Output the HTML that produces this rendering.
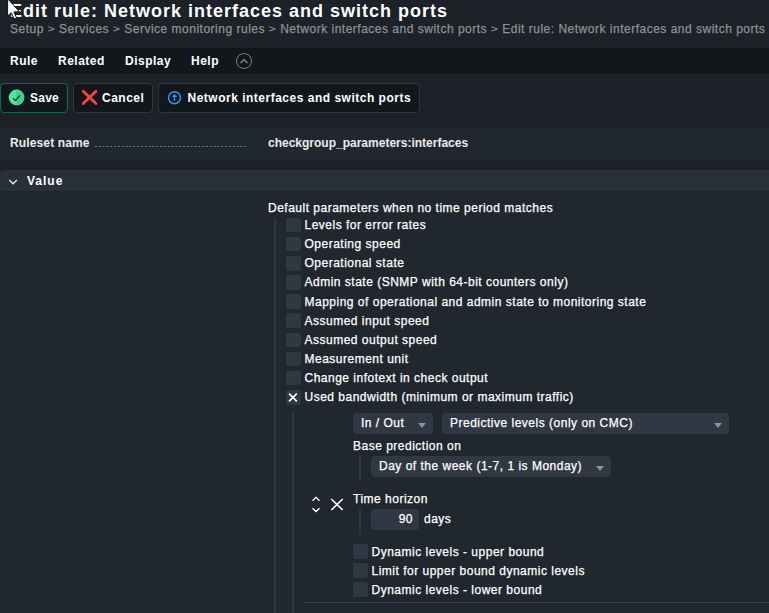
<!DOCTYPE html>
<html lang="en">
<head>
<meta charset="utf-8">
<title>Edit rule: Network interfaces and switch ports</title>
<style>
*{box-sizing:border-box;margin:0;padding:0}
html,body{width:769px;height:613px;overflow:hidden;background:#1c2228}
body{position:relative;font-family:"Liberation Sans",Arial,Helvetica,sans-serif;font-size:12px;color:#fff}
.abs{position:absolute;white-space:nowrap}
#title{left:10px;top:0;font-size:18px;font-weight:bold;line-height:22px;letter-spacing:1px;color:#fff}
#crumb{left:10px;top:22px;font-size:12px;line-height:15px;color:#8d9196;letter-spacing:.5px;-webkit-text-stroke:.25px currentColor}
#crumb span{display:inline-block;transform:scaleY(.72);transform-origin:50% 62%;position:relative;top:-1.300px}
#menubar{left:0;top:48px;width:769px;height:26px;background:#12171c;border-radius:3px 0 0 3px}
.mi{top:48px;height:26px;line-height:26px;font-weight:bold;font-size:12px;letter-spacing:.5px}
.btn{top:83px;height:30px;border:1px solid #2f3640;border-radius:4px;background:#12171c;font-weight:bold;line-height:28px;font-size:12px;letter-spacing:.5px}
#rowname{left:0;top:128px;width:769px;height:32px;background:#20272e;border-radius:4px 0 0 4px}
#valhead{left:0;top:170px;width:769px;height:21px;background:#283039;border-radius:4px 0 0 0}
.lbl{font-size:12px;line-height:15px;letter-spacing:.5px;-webkit-text-stroke:.25px currentColor}
.cb{width:15px;background:#2f3843;border-radius:2px}
.vline{width:2px;background:#2e3741}
.sel{height:21px;background:#2f3843;border-radius:4px;line-height:21px;padding-left:8px;font-size:12px;letter-spacing:.5px;-webkit-text-stroke:.25px currentColor}
.arr{width:0;height:0;border-left:4px solid transparent;border-right:4px solid transparent;border-top:5px solid #8d9299}
</style>
</head>
<body>
<div id="title" class="abs">Edit rule: Network interfaces and switch ports</div>
<div id="crumb" class="abs">Setup <span>&gt;</span> Services <span>&gt;</span> Service monitoring rules <span>&gt;</span> Network interfaces and switch ports <span>&gt;</span> Edit rule: Network interfaces and switch ports</div>

<div id="menubar" class="abs"></div>
<div class="abs mi" style="left:10px">Rule</div>
<div class="abs mi" style="left:58px">Related</div>
<div class="abs mi" style="left:125px">Display</div>
<div class="abs mi" style="left:191px">Help</div>
<svg class="abs" style="left:235px;top:52px" width="18" height="18" viewBox="0 0 18 18"><circle cx="9" cy="9" r="7.500" fill="none" stroke="#83878c" stroke-width=".900"/><path d="M5.600 11 L9 7.600 L12.400 11" fill="none" stroke="#8b9096" stroke-width="1.200"/></svg>

<div class="abs btn" style="left:0;width:68px;border-color:#17694a;padding-left:29px;letter-spacing:.25px">Save</div>
<svg class="abs" style="left:8px;top:89px" width="18" height="18" viewBox="8 89 18 18"><circle cx="16.500" cy="97.400" r="7.800" fill="#54e59d"/><path d="M16 89.620 A7.800 7.800 0 0 1 16 105.180 Z M16 89.600 H16.500 A7.800 7.800 0 0 1 16.500 105.200 H16 Z" fill="#43d08b"/><path d="M13.100 98.300 L15.400 100.600 L20.050 95.300" fill="none" stroke="#1b2a2b" stroke-width="1.200"/></svg>
<div class="abs btn" style="left:73px;width:80px;padding-left:28px">Cancel</div>
<svg class="abs" style="left:80px;top:88px" width="20" height="19" viewBox="80 88 20 19"><path d="M83.300 91.300 L95.900 103.500 M95.900 91.300 L83.300 103.500" stroke="#f4483a" stroke-width="2.800" stroke-linecap="round"/></svg>
<div class="abs btn" style="left:158px;width:262px;padding-left:28.500px">Network interfaces and switch ports</div>
<svg class="abs" style="left:166px;top:89px" width="18" height="18" viewBox="166 89 18 18"><circle cx="174.500" cy="97.650" r="6" fill="none" stroke="#2a97ee" stroke-width="1.500"/><path d="M174.500 93.800 L172.100 97.100 H173.850 V101.100 H175.150 V97.100 H176.900 Z" fill="#2a9df4"/></svg>

<div id="rowname" class="abs"></div>
<div class="abs lbl" style="left:10px;top:136px;font-weight:bold;letter-spacing:.13px;color:#ececec;-webkit-text-stroke:0">Ruleset name</div>
<div class="abs" style="left:95px;top:146px;width:153px;height:1px;background-image:linear-gradient(to right,#757b82 56%,transparent 56%);background-size:3.830px 1px"></div>
<div class="abs lbl" style="left:268px;top:136px;font-weight:bold;letter-spacing:0;color:#ececec;-webkit-text-stroke:0">checkgroup_parameters:interfaces</div>

<div class="abs" style="left:0;top:191px;width:769px;height:422px;background:#20272e"></div>
<div id="valhead" class="abs"></div>
<svg class="abs" style="left:8px;top:178px" width="10" height="8" viewBox="0 0 10 8"><path d="M1.300 2 L5.100 5.800 L8.900 2" fill="none" stroke="#e8e8e8" stroke-width="1.300"/></svg>
<div class="abs lbl" style="left:27px;top:174px;font-weight:bold;letter-spacing:1px;-webkit-text-stroke:0">Value</div>

<div class="abs lbl" style="left:268px;top:201px">Default parameters when no time period matches</div>
<div class="abs vline" style="left:274px;top:218px;height:395px"></div>

<div class="abs cb" style="left:286px;top:218px;height:14px"></div><div class="abs lbl" style="left:304.500px;top:218px">Levels for error rates</div>
<div class="abs cb" style="left:286px;top:237px;height:14px"></div><div class="abs lbl" style="left:304.500px;top:237px">Operating speed</div>
<div class="abs cb" style="left:286px;top:256px;height:15px"></div><div class="abs lbl" style="left:304.500px;top:256px">Operational state</div>
<div class="abs cb" style="left:286px;top:275px;height:15px"></div><div class="abs lbl" style="left:304.500px;top:275px">Admin state (SNMP with 64-bit counters only)</div>
<div class="abs cb" style="left:286px;top:294px;height:15px"></div><div class="abs lbl" style="left:304.500px;top:295px">Mapping of operational and admin state to monitoring state</div>
<div class="abs cb" style="left:286px;top:313px;height:15px"></div><div class="abs lbl" style="left:304.500px;top:314px">Assumed input speed</div>
<div class="abs cb" style="left:286px;top:333px;height:14px"></div><div class="abs lbl" style="left:304.500px;top:333px">Assumed output speed</div>
<div class="abs cb" style="left:286px;top:352px;height:14px"></div><div class="abs lbl" style="left:304.500px;top:352px">Measurement unit</div>
<div class="abs cb" style="left:286px;top:371px;height:14px"></div><div class="abs lbl" style="left:304.500px;top:371px">Change infotext in check output</div>
<div class="abs cb" style="left:286px;top:390px;height:15px"></div><div class="abs lbl" style="left:304.500px;top:390px">Used bandwidth (minimum or maximum traffic)</div>
<svg class="abs" style="left:287px;top:392px" width="12" height="12" viewBox="287 392 12 12"><path d="M289 393.600 L296.800 401.400 M296.800 393.600 L289 401.400" stroke="#fff" stroke-width="1.600"/></svg>

<div class="abs vline" style="left:292px;top:413px;height:200px"></div>
<div class="abs sel" style="left:353px;top:413px;width:80px">In / Out</div><div class="abs arr" style="left:418px;top:423px"></div>
<div class="abs sel" style="left:442px;top:413px;width:287px">Predictive levels (only on CMC)</div><div class="abs arr" style="left:714px;top:423px"></div>
<div class="abs lbl" style="left:353px;top:439px">Base prediction on</div>
<div class="abs vline" style="left:359px;top:456px;height:26px"></div>
<div class="abs sel" style="left:371px;top:456px;width:240px">Day of the week (1-7, 1 is Monday)</div><div class="abs arr" style="left:596px;top:466px"></div>

<svg class="abs" style="left:310px;top:495px" width="12" height="20" viewBox="310 495 12 20"><path d="M312.500 500.800 L316 497.400 L319.500 500.800 M312.500 508.200 L316 511.500 L319.500 508.200" fill="none" stroke="#fff" stroke-width="1.300"/></svg>
<svg class="abs" style="left:329px;top:497px" width="16" height="16" viewBox="329 497 16 16"><path d="M331.300 499 L342.700 510 M342.700 499 L331.300 510" stroke="#fff" stroke-width="1.600"/></svg>
<div class="abs lbl" style="left:353px;top:492px">Time horizon</div>
<div class="abs vline" style="left:359px;top:509px;height:26px"></div>
<div class="abs sel" style="left:371px;top:509px;width:48px;text-align:right;padding:0 6px 0 0">90</div>
<div class="abs lbl" style="left:424px;top:512px">days</div>

<div class="abs cb" style="left:353px;top:544px;height:15px"></div><div class="abs lbl" style="left:371.500px;top:545px">Dynamic levels - upper bound</div>
<div class="abs cb" style="left:353px;top:563px;height:15px"></div><div class="abs lbl" style="left:371.500px;top:564px">Limit for upper bound dynamic levels</div>
<div class="abs cb" style="left:353px;top:582px;height:15px"></div><div class="abs lbl" style="left:371.500px;top:583px">Dynamic levels - lower bound</div>
<div class="abs" style="left:304px;top:602px;width:465px;height:1px;background:#3a424d"></div>

<svg class="abs" style="left:0;top:0" width="24" height="22" viewBox="0 0 24 22"><path d="M7.600 -1.200 V16 L11.300 12.800 L14.200 19.100 L16.600 18 L13.900 11.900 L19.500 11.700 Z" fill="#fff" stroke="#111" stroke-width="1" stroke-linejoin="round"/></svg>
</body>
</html>
